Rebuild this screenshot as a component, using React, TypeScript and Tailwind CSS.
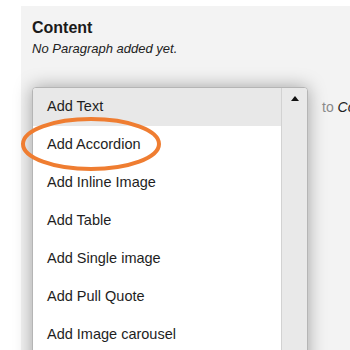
import React from "react";

const items = [
  "Add Text",
  "Add Accordion",
  "Add Inline Image",
  "Add Table",
  "Add Single image",
  "Add Pull Quote",
  "Add Image carousel",
];

export default function App() {
  return (
    <div
      className="relative w-[350px] h-[350px] overflow-hidden bg-white pt-[6px] pl-[21px]"
      style={{ fontFamily: '"Liberation Sans", Arial, sans-serif' }}
    >
      <div className="h-[400px] bg-[#f3f3f3] pl-[11px] pt-[12px]">
        <div className="text-[16px] leading-[20px] font-bold text-[#1a1a1a]">Content</div>
        <div className="mt-[3px] text-[13px] leading-[16px] italic text-[#222]">No Paragraph added yet.</div>
        <div className="mt-[30px] flex items-start">
          <div className="w-[276px] h-[300px] shrink-0 flex bg-white border border-[#b5b5b5] rounded-t-[4px] shadow-[0_0_18px_rgba(0,0,0,0.34)] overflow-hidden">
            <div className="flex-1 flex flex-col">
              {items.map((t, i) => (
                <div
                  key={t}
                  className={
                    "h-[38px] shrink-0 flex items-center pl-[14px] text-[14.5px] text-[#1e1e1e] " +
                    (i === 0 ? "bg-[#e8e8e8]" : "bg-white")
                  }
                >
                  {t}
                </div>
              ))}
            </div>
            <div className="w-[26px] bg-[#e9e9e9] border-l border-[#d2d2d2] flex justify-center pt-[8px]">
              <div className="w-0 h-0 border-l-[4px] border-r-[4px] border-b-[5px] border-l-transparent border-r-transparent border-b-[#111]" />
            </div>
          </div>
          <div className="ml-[14px] mt-[12px] shrink-0 whitespace-nowrap text-[14px] leading-[16px]">
            <span className="text-[#8a8a8a]">to </span>
            <span className="italic text-[#222]">Content</span>
          </div>
        </div>
      </div>
      <svg
        className="absolute left-[20px] top-[116px]"
        width="142"
        height="56"
        viewBox="0 0 142 56"
      >
        <ellipse cx="71" cy="28" rx="68" ry="25" fill="none" stroke="#ef7d31" strokeWidth="4" />
      </svg>
    </div>
  );
}
